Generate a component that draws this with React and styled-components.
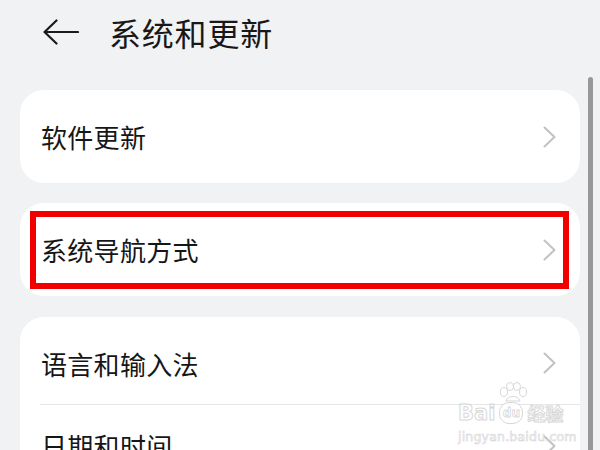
import React from "react";
import styled, { createGlobalStyle } from "styled-components";

const GlobalStyle = createGlobalStyle`
  html, body {
    margin: 0;
    padding: 0;
    background: #f1f2f4;
  }
  body {
    font-family: "Noto Sans CJK SC", "Noto Sans", sans-serif;
    overflow: hidden;
  }
`;

const Screen = styled.div`
  position: relative;
  width: 600px;
  height: 450px;
  overflow: hidden;
  background: #f1f2f4;
`;

const Content = styled.div`
  display: flex;
  flex-direction: column;
  padding: 0 20px;
`;

const Header = styled.div`
  display: flex;
  align-items: center;
  height: 64px;
  padding-left: 23px;
  gap: 30px;
  margin-bottom: 26px;
`;

const Title = styled.h1`
  margin: 0;
  font-size: 32px;
  font-weight: 400;
  color: #181818;
  letter-spacing: 0.8px;
`;

const Card = styled.div`
  position: relative;
  background: #ffffff;
  border-radius: 24px;
  margin-bottom: ${(p) => p.$gap || 20}px;
  overflow: hidden;
`;

const Row = styled.div`
  display: flex;
  align-items: center;
  justify-content: space-between;
  box-sizing: border-box;
  height: ${(p) => p.$h}px;
  padding: ${(p) => p.$top || 0}px 24px 0 21px;
`;

const Label = styled.span`
  font-size: 26px;
  color: #161616;
  letter-spacing: 0.3px;
`;

const Divider = styled.div`
  height: 1px;
  background: #e6e6e6;
  margin: 0 0 0 20px;
`;

const Highlight = styled.div`
  position: absolute;
  top: 8px;
  left: 10px;
  right: 11px;
  bottom: 7px;
  border: 6px solid #f20000;
  pointer-events: none;
`;

const ScrollThumb = styled.div`
  position: absolute;
  left: 588px;
  top: 77px;
  width: 5px;
  bottom: 0;
  border-radius: 3px 3px 0 0;
  background: #989898;
`;

const Watermark = styled.div`
  position: absolute;
  left: 458px;
  top: 382px;
  display: flex;
  flex-direction: column;
  align-items: flex-start;
  opacity: 0.8;
`;

const MarkLine = styled.div`
  display: flex;
  align-items: center;
  gap: 4px;
  color: #ffffff;
  -webkit-text-stroke: 1px #cfcfcf;
`;

const MarkBig = styled.span`
  font-family: "DejaVu Sans", sans-serif;
  font-weight: bold;
  font-size: ${(p) => p.$size || 21}px;
  line-height: 1;
`;

const MarkCjk = styled(MarkBig)`
  font-family: "Noto Sans CJK SC", sans-serif;
`;

const MarkSmall = styled.span`
  font-family: "DejaVu Sans", sans-serif;
  font-size: 12.5px;
  color: #ffffff;
  -webkit-text-stroke: 0.6px #cccccc;
  margin-top: 5px;
  letter-spacing: 0.2px;
`;

const PawWrap = styled.div`
  margin-left: 40px;
  height: 20px;
`;

const DuBadge = styled.span`
  display: inline-flex;
  align-items: center;
  justify-content: center;
  width: 22px;
  height: 20px;
  border-radius: 10px;
  border: 1.5px solid #cfcfcf;
  background: #fff;
  font-family: "DejaVu Sans", sans-serif;
  font-weight: bold;
  font-size: 12px;
  -webkit-text-stroke: 0.8px #cfcfcf;
  color: #fff;
`;

const BackArrow = () => (
  <svg width="36" height="26" viewBox="0 0 36 26" fill="none">
    <path
      d="M1.5 13 H35 M13.5 1.5 L1.5 13 L13.5 24.5"
      stroke="#1a1a1a"
      strokeWidth="2.2"
      strokeLinecap="round"
      strokeLinejoin="round"
    />
  </svg>
);

const Chevron = () => (
  <svg width="13" height="22" viewBox="0 0 13 22" fill="none">
    <path
      d="M1.5 1.5 L11.5 11 L1.5 20.5"
      stroke="#c2c2c2"
      strokeWidth="2"
      strokeLinecap="round"
      strokeLinejoin="round"
    />
  </svg>
);

const Paw = () => (
  <svg width="30" height="20" viewBox="0 0 30 20" fill="#fff" stroke="#cfcfcf" strokeWidth="1">
    <ellipse cx="6" cy="10" rx="3.5" ry="4.5" />
    <ellipse cx="12" cy="4.5" rx="3.5" ry="4" />
    <ellipse cx="19" cy="4.5" rx="3.5" ry="4" />
    <ellipse cx="25" cy="10" rx="3.5" ry="4.5" />
    <path d="M8 19 C9 13 21 13 22 19 Z" />
  </svg>
);

function ItemRow({ label, h, top }) {
  return (
    <Row $h={h} $top={top}>
      <Label>{label}</Label>
      <Chevron />
    </Row>
  );
}

export default function App() {
  return (
    <Screen>
      <GlobalStyle />
      <Content>
        <Header>
          <BackArrow />
          <Title>系统和更新</Title>
        </Header>
        <Card>
          <ItemRow label="软件更新" h={93} />
        </Card>
        <Card $gap={21}>
          <ItemRow label="系统导航方式" h={93} />
          <Highlight />
        </Card>
        <Card>
          <ItemRow label="语言和输入法" h={87} top={5} />
          <Divider />
          <ItemRow label="日期和时间" h={81} />
        </Card>
      </Content>
      <ScrollThumb />
      <Watermark>
        <PawWrap>
          <Paw />
        </PawWrap>
        <MarkLine>
          <MarkBig>Bai</MarkBig>
          <DuBadge>du</DuBadge>
          <MarkCjk $size={18}>经验</MarkCjk>
        </MarkLine>
        <MarkSmall>jingyan.baidu.com</MarkSmall>
      </Watermark>
    </Screen>
  );
}
